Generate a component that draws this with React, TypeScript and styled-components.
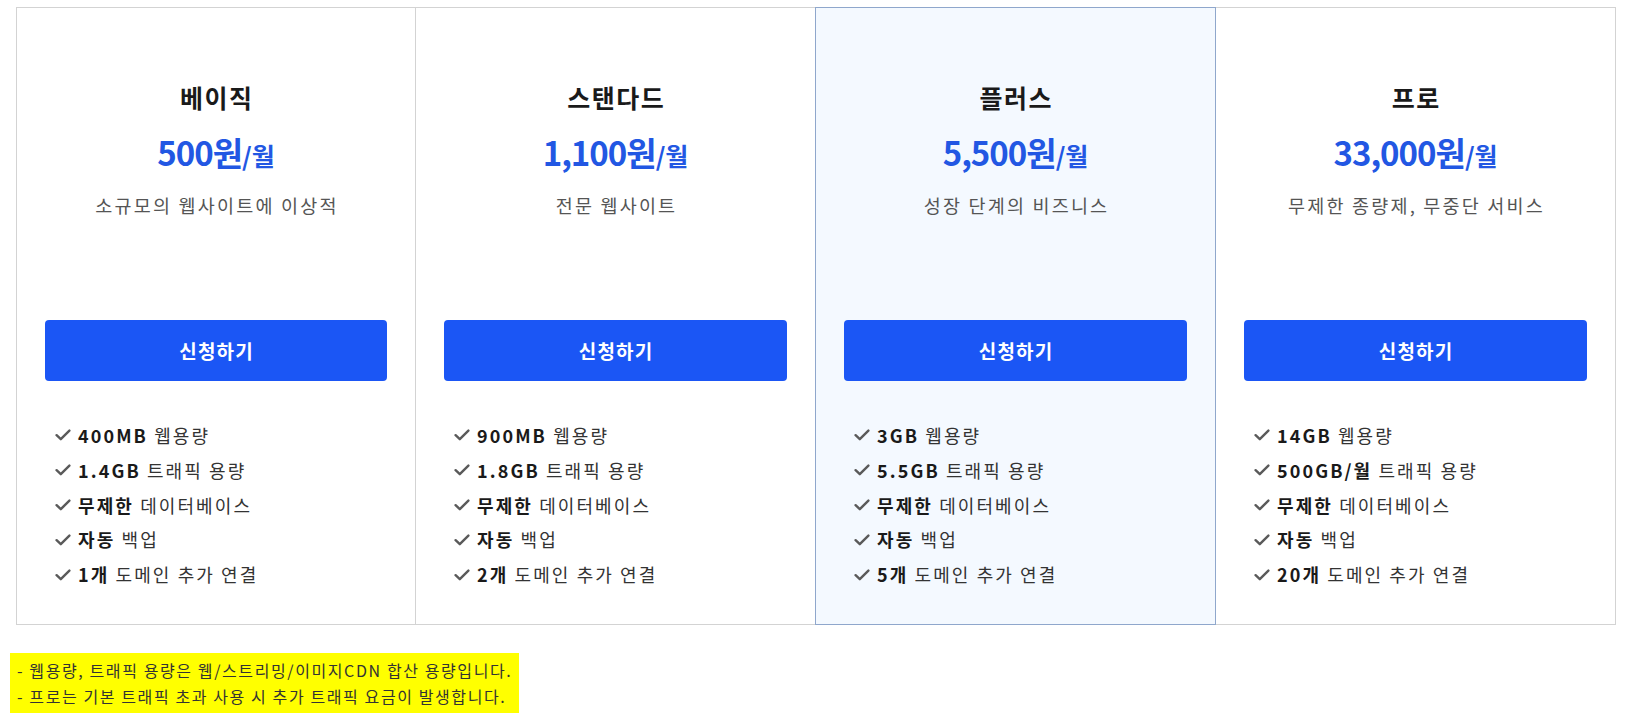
import React from 'react';
import styled, { createGlobalStyle } from 'styled-components';

interface Feature {
  strong: string;
  rest: string;
}

interface Plan {
  name: string;
  price: string;
  desc: string;
  features: Feature[];
  highlight?: boolean;
}

const plans: Plan[] = [
  {
    name: '베이직',
    price: '500원',
    desc: '소규모의 웹사이트에 이상적',
    features: [
      { strong: '400MB', rest: '웹용량' },
      { strong: '1.4GB', rest: '트래픽 용량' },
      { strong: '무제한', rest: '데이터베이스' },
      { strong: '자동', rest: '백업' },
      { strong: '1개', rest: '도메인 추가 연결' },
    ],
  },
  {
    name: '스탠다드',
    price: '1,100원',
    desc: '전문 웹사이트',
    features: [
      { strong: '900MB', rest: '웹용량' },
      { strong: '1.8GB', rest: '트래픽 용량' },
      { strong: '무제한', rest: '데이터베이스' },
      { strong: '자동', rest: '백업' },
      { strong: '2개', rest: '도메인 추가 연결' },
    ],
  },
  {
    name: '플러스',
    price: '5,500원',
    desc: '성장 단계의 비즈니스',
    highlight: true,
    features: [
      { strong: '3GB', rest: '웹용량' },
      { strong: '5.5GB', rest: '트래픽 용량' },
      { strong: '무제한', rest: '데이터베이스' },
      { strong: '자동', rest: '백업' },
      { strong: '5개', rest: '도메인 추가 연결' },
    ],
  },
  {
    name: '프로',
    price: '33,000원',
    desc: '무제한 종량제, 무중단 서비스',
    features: [
      { strong: '14GB', rest: '웹용량' },
      { strong: '500GB/월', rest: '트래픽 용량' },
      { strong: '무제한', rest: '데이터베이스' },
      { strong: '자동', rest: '백업' },
      { strong: '20개', rest: '도메인 추가 연결' },
    ],
  },
];

const CheckIcon: React.FC = () => (
  <svg width="16" height="12" viewBox="0 0 16 12" fill="none">
    <path
      d="M1.6 6.2 L5.8 10.2 L14.4 1.6"
      stroke="#5a5a5a"
      strokeWidth="2.4"
      strokeLinecap="round"
      strokeLinejoin="round"
    />
  </svg>
);

const App: React.FC = () => {
  return (
    <Page>
      <GlobalStyle />
      <PlanGrid>
        {plans.map((plan) => (
          <Card key={plan.name} highlight={plan.highlight}>
            <PlanName>{plan.name}</PlanName>
            <Price>
              {plan.price}
              <Per>/월</Per>
            </Price>
            <Desc>{plan.desc}</Desc>
            <ApplyButton type="button">신청하기</ApplyButton>
            <FeatureList>
              {plan.features.map((f) => (
                <FeatureItem key={f.strong + f.rest}>
                  <CheckIcon />
                  <span>
                    <b>{f.strong}</b> {f.rest}
                  </span>
                </FeatureItem>
              ))}
            </FeatureList>
          </Card>
        ))}
      </PlanGrid>
      <Note>
        - 웹용량, 트래픽 용량은 웹/스트리밍/이미지CDN 합산 용량입니다.
        <br />- 프로는 기본 트래픽 초과 사용 시 추가 트래픽 요금이 발생합니다.
      </Note>
    </Page>
  );
};

const GlobalStyle = createGlobalStyle`
  body {
    margin: 0;
    background: #fff;
    font-family: "Noto Sans CJK KR", "Noto Sans", sans-serif;
    color: #222;
  }
`;

const Page = styled.div`
  padding: 7px 0 7px;
`;

const PlanGrid = styled.div`
  display: grid;
  grid-template-columns: repeat(4, 1fr);
  max-width: 1600px;
  margin: 0 auto;
`;

const Card = styled.div<{ highlight?: boolean }>`
  position: relative;
  z-index: ${(p) => (p.highlight ? 1 : 0)};
  display: flex;
  flex-direction: column;
  align-items: stretch;
  padding: 72px 28px 32px;
  border: 1px solid ${(p) => (p.highlight ? '#8fa7cc' : '#d3d3d3')};
  background: ${(p) => (p.highlight ? '#f4f9ff' : '#fff')};
  text-align: center;

  & + & {
    margin-left: -1px;
  }
`;

const PlanName = styled.h3`
  margin: 0;
  padding-left: 1.5px;
  font-size: 25px;
  line-height: 34px;
  font-weight: 700;
  letter-spacing: 1.5px;
  color: #1a1a1a;
`;

const Price = styled.div`
  margin-top: 16px;
  font-size: 33px;
  line-height: 44px;
  font-weight: 700;
  color: #2257e3;
  letter-spacing: -1px;
`;

const Per = styled.span`
  font-size: 25px;
  font-weight: 600;
  letter-spacing: 0;
`;

const Desc = styled.p`
  margin: 15px 0 0;
  padding-left: 2px;
  font-size: 18.5px;
  line-height: 26px;
  letter-spacing: 2.2px;
  color: #555;
`;

const ApplyButton = styled.button`
  margin-top: 102px;
  height: 61px;
  padding: 0 0 0 1.2px;
  border: 0;
  border-radius: 4px;
  background: #1b56f5;
  color: #fff;
  font-family: inherit;
  font-size: 19px;
  font-weight: 700;
  letter-spacing: 1.2px;
  cursor: pointer;
`;

const FeatureList = styled.ul`
  list-style: none;
  margin: 37px 0 0;
  padding: 0 0 0 10px;
  text-align: left;
`;

const FeatureItem = styled.li`
  display: flex;
  align-items: center;
  gap: 7px;
  font-size: 18px;
  line-height: 34.8px;
  letter-spacing: 2.1px;
  color: #333;

  b {
    font-weight: 700;
    color: #1a1a1a;
  }
`;

const Note = styled.p`
  display: inline-block;
  margin: 28px 0 0 10px;
  padding: 4px 7px;
  background: #ffff00;
  font-size: 16px;
  line-height: 26px;
  letter-spacing: 1.6px;
  color: #333;
`;

export default App;
